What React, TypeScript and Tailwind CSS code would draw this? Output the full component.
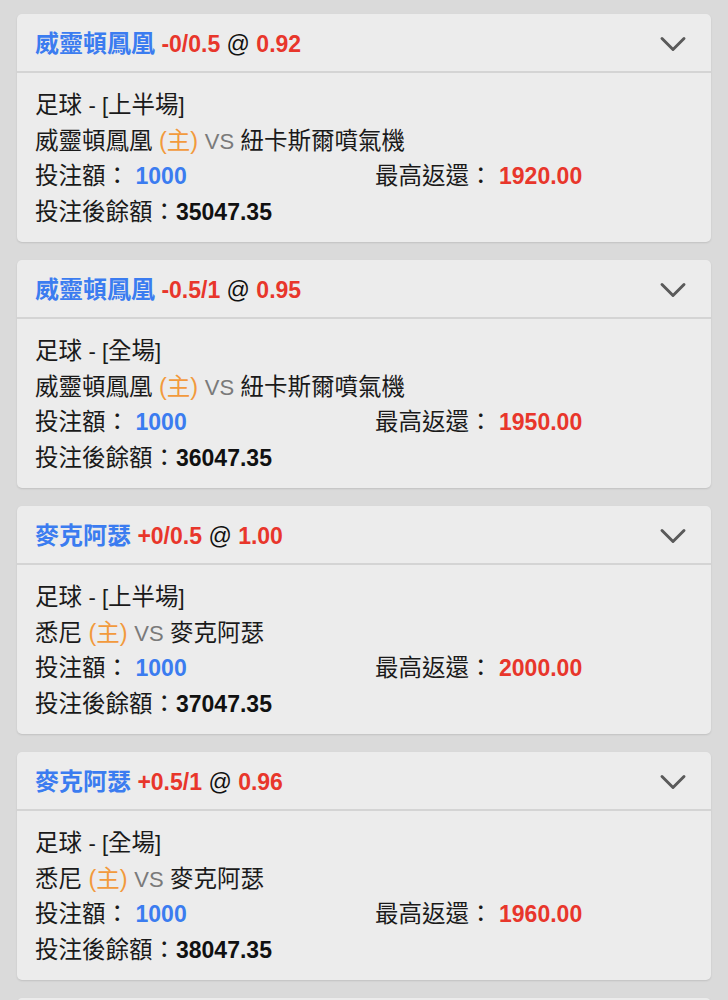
import { ChevronDown } from "lucide-react";

type Bet = {
  team: string;
  line: string;
  odds: string;
  period: string;
  home: string;
  away: string;
  stake: string;
  maxReturn: string;
  balance: string;
};

const bets: Bet[] = [
  {
    team: "威靈頓鳳凰",
    line: "-0/0.5",
    odds: "0.92",
    period: "上半場",
    home: "威靈頓鳳凰",
    away: "紐卡斯爾噴氣機",
    stake: "1000",
    maxReturn: "1920.00",
    balance: "35047.35",
  },
  {
    team: "威靈頓鳳凰",
    line: "-0.5/1",
    odds: "0.95",
    period: "全場",
    home: "威靈頓鳳凰",
    away: "紐卡斯爾噴氣機",
    stake: "1000",
    maxReturn: "1950.00",
    balance: "36047.35",
  },
  {
    team: "麥克阿瑟",
    line: "+0/0.5",
    odds: "1.00",
    period: "上半場",
    home: "悉尼",
    away: "麥克阿瑟",
    stake: "1000",
    maxReturn: "2000.00",
    balance: "37047.35",
  },
  {
    team: "麥克阿瑟",
    line: "+0.5/1",
    odds: "0.96",
    period: "全場",
    home: "悉尼",
    away: "麥克阿瑟",
    stake: "1000",
    maxReturn: "1960.00",
    balance: "38047.35",
  },
  {
    team: "麥克阿瑟",
    line: "+0.5/1",
    odds: "0.96",
    period: "全場",
    home: "悉尼",
    away: "麥克阿瑟",
    stake: "1000",
    maxReturn: "1960.00",
    balance: "39047.35",
  },
];

function BetCard({ bet }: { bet: Bet }) {
  return (
    <div className="shrink-0 overflow-hidden rounded-[5px] bg-[#ececec] shadow-[0_1px_2px_rgba(0,0,0,0.12)]">

      {/* header */}
      <div className="flex h-[59px] items-center justify-between border-b-2 border-[#d4d4d4] pl-[18px] pr-[16px] pt-[2px]">
        <div className="text-[23px] font-bold leading-none">
          <span className="text-[24px] text-[#3b7cf0]">{bet.team}</span>{" "}
          <span className="text-[#e8362b]">{bet.line}</span>{" "}
          <span className="font-normal text-[#111]">@</span>{" "}
          <span className="text-[#e8362b]">{bet.odds}</span>
        </div>
        <ChevronDown
          className="h-[44px] w-[44px] text-[#5a5a5a]"
          strokeWidth={1.6}
        />
      </div>

      {/* body */}
      <div className="px-[18px] pb-[12px] pt-[15px] text-[23.5px] leading-[35.5px] text-[#1a1a1a]">
        <div>
          足球 <span className="text-[22px]">- [</span>{bet.period}
          <span className="text-[22px]">]</span>
        </div>
        <div>
          {bet.home} <span className="text-[#f29a3c]">(主)</span>{" "}
          <span className="text-[22px] text-[#7a7a7a]">VS</span> {bet.away}
        </div>
        <div className="flex">
          <div className="w-[340px]">
            投注額：{" "}
            <span className="text-[23px] font-bold text-[#3b7cf0]">{bet.stake}</span>
          </div>
          <div>
            最高返還：{" "}
            <span className="text-[23px] font-bold text-[#e8362b]">{bet.maxReturn}</span>
          </div>
        </div>
        <div>
          投注後餘額：
          <span className="text-[23px] font-bold text-[#111]">{bet.balance}</span>
        </div>
      </div>

    </div>
  );
}

export default function App() {
  return (
    <div
      className="flex h-[1000px] flex-col gap-[18px] overflow-hidden bg-[#dadada] px-[17px] pt-[14px]"
      style={{ fontFamily: '"Liberation Sans", "Noto Sans CJK TC", sans-serif' }}
    >
      {bets.map((bet, i) => (
        <BetCard key={i} bet={bet} />
      ))}
    </div>
  );
}
